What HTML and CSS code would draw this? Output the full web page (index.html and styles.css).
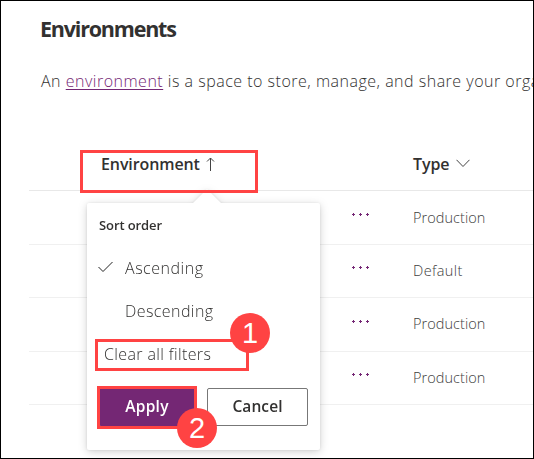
FILE: index.html
```html
<!DOCTYPE html>
<html lang="en">
<head>
<meta charset="utf-8">
<title>Environments</title>
<link rel="stylesheet" href="styles.css">
</head>
<body>
<main class="page">
  <h1 class="title"><span>Environments</span></h1>
  <p class="intro"><span>An </span><a class="link" href="#">environment</a><span> is a space to store, manage, and share your orga</span></p>
  <section class="table">
    <div class="row head">
      <div class="name"><span class="head-label">Environment</span>
        <svg class="arrow" width="9" height="15" viewBox="0 0 9 15"><path d="M4.5 14V1M1 4.5L4.5 1L8 4.5"/></svg>
      </div>
      <div class="type"><span class="head-label type-label">Type</span>
        <svg class="chevron" width="14" height="9" viewBox="0 0 14 9"><path d="M.5 .8L7 7.5L13.5 .8"/></svg>
      </div>
    </div>
    <div class="row"><div class="more"><i></i><i></i><i></i></div><div class="type">Production</div></div>
    <div class="row short"><div class="more"><i></i><i></i><i></i></div><div class="type default">Default</div></div>
    <div class="row"><div class="more"><i></i><i></i><i></i></div><div class="type third">Production</div></div>
    <div class="row short last"><div class="more"><i></i><i></i><i></i></div><div class="type">Production</div></div>
  </section>
  <div class="callout">
    <h2 class="sort"><span>Sort order</span></h2>
    <div class="option">
      <svg class="check" width="15" height="12" viewBox="0 0 15 12"><path d="M.5 6L5 10.5L14.5 1"/></svg>
      <span class="asc">Ascending</span>
    </div>
    <div class="option"><span class="desc">Descending</span></div>
    <div class="option clear"><span>Clear all filters</span></div>
    <div class="actions">
      <button class="btn primary"><span>Apply</span></button>
      <button class="btn"><span>Cancel</span></button>
    </div>
  </div>
  <div class="mark mark-head"></div>
  <div class="mark mark-clear"></div>
  <div class="mark mark-apply"></div>
  <div class="badge one">1</div>
  <div class="badge two">2</div>
</main>
</body>
</html>
```
FILE: styles.css
```css
* { box-sizing: border-box; }
body { margin: 0; background: #fff; font-family: "Open Sans", "Noto Sans", sans-serif; color: #323130; }
.page { position: relative; width: 534px; height: 459px; border: 1px solid #000; overflow: hidden; background: #fff; }
.title { margin: 11px 0 0 39px; height: 34px; font-size: 21.5px; line-height: 34px; font-weight: 700; letter-spacing: -1.2px; }
.intro { margin: 23px 0 0 40px; height: 24px; font-size: 16px; line-height: 24px; font-weight: 300; letter-spacing: .5px; white-space: pre; }
.link { color: #742774; text-decoration: underline; text-underline-offset: 2px; text-decoration-thickness: 1px; text-decoration-skip-ink: none; }
.table { margin: 44px 0 0 28px; }
.row { display: flex; align-items: center; height: 54px; border-bottom: 1px solid #f0f0f0; }
.row.short { height: 53px; }
.row.head { height: 54px; border-bottom-color: #e8e8e8; }
.head .name { display: flex; align-items: center; gap: 6px; width: 312px; padding-left: 72px; }
.head-label { font-size: 16px; font-weight: 600; line-height: 22px; letter-spacing: -.1px; }
.type { display: flex; align-items: center; gap: 7px; padding: 0 0 1px 72px; font-size: 14.5px; font-weight: 300; color: #404040; letter-spacing: .05px; }
.type.default { letter-spacing: .4px; }
.head .type { color: #323130; padding-bottom: 0; }
.row:not(.head) .type { padding-left: 43px; }
.row .type.third { padding-bottom: 2px; }
.more { display: flex; gap: 4px; width: 341px; padding: 0 0 7px 323px; }
.more i { width: 3px; height: 3px; flex: none; background: linear-gradient(#742774,#742774) 1px 0 / 1px 3px no-repeat, linear-gradient(#742774,#742774) 0 1px / 3px 1px no-repeat; }
svg { fill: none; stroke: #444; stroke-width: 1; flex: none; }
.arrow { margin-top: 1px; }
.callout { position: absolute; left: 86px; top: 202px; width: 233px; height: 247px; padding: 12px 12px 0; background: #fff; border-radius: 2px; filter: drop-shadow(0 2px 4px rgba(0,0,0,.18)) drop-shadow(0 0 1px rgba(0,0,0,.08)); }
.callout::before { content: ""; position: absolute; left: 106px; top: -14px; width: 28px; height: 14px; background: #fff; clip-path: polygon(50% 0, 100% 100%, 0 100%); }
.sort { margin: 0; height: 20px; line-height: 20px; font-size: 13px; font-weight: 600; letter-spacing: -.1px; }
.option { display: flex; align-items: center; height: 43px; font-size: 16px; font-weight: 300; }
.sort + .option { margin-top: 11px; }
.check { margin: 0 11px 2px -1px; stroke: #222; }
.asc { margin-left: 1px; letter-spacing: .52px; }
.desc { margin-left: 26px; letter-spacing: .42px; }
.clear { padding-left: 5px; letter-spacing: .37px; }
.actions { display: flex; gap: 11px; margin-top: 13px; }
.btn { display: flex; align-items: center; justify-content: center; width: 101px; height: 38px; margin: 0; padding: 0 0 2px; font: 600 15.5px "Open Sans", sans-serif; color: #323130; background: #fff; border: 1px solid #777; border-radius: 2px; letter-spacing: .1px; }
.btn.primary { width: 97px; padding-right: 1px; background: #742774; border-color: #742774; color: #fff; letter-spacing: .3px; }
.mark { position: absolute; border: 3px solid #ff4343; }
.mark-head { left: 79px; top: 149px; width: 178px; height: 43px; }
.mark-clear { left: 94px; top: 338px; width: 154px; height: 32px; }
.mark-apply { left: 96px; top: 385px; width: 100px; height: 43px; }
.badge { position: absolute; width: 40px; height: 40px; border-radius: 50%; background: #ff4343; color: #fff; font: 29px/40px "Liberation Sans", sans-serif; text-align: center; }
.one { left: 229px; top: 312px; }
.two { left: 176px; top: 407px; }
```
